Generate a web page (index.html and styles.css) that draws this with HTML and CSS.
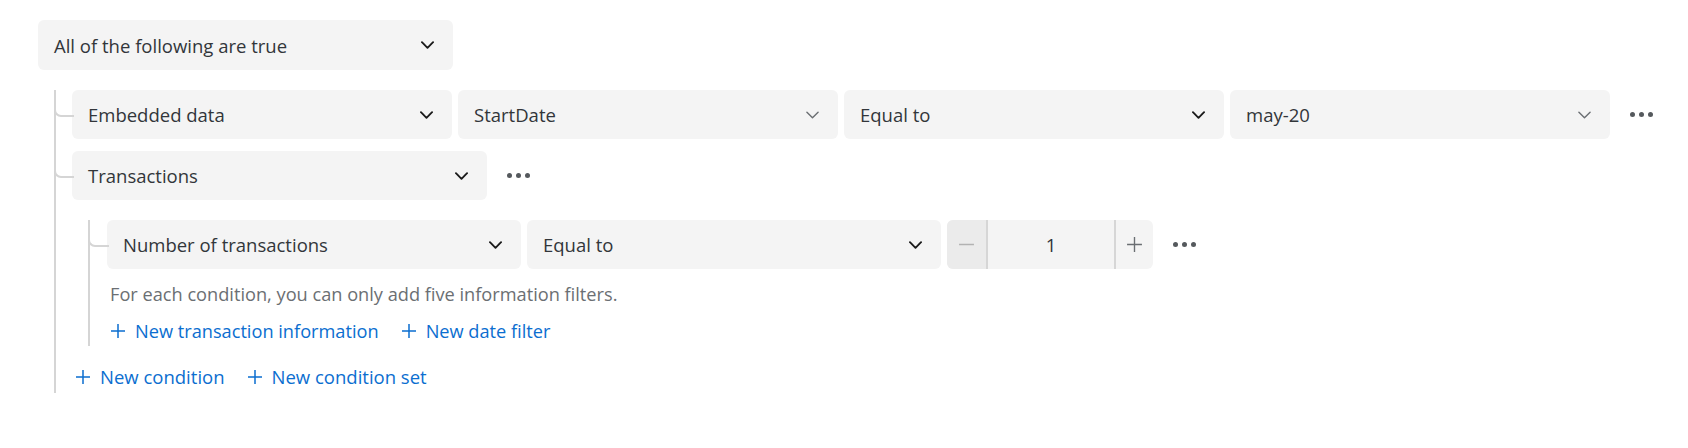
FILE: index.html
```html
<!DOCTYPE html>
<html lang="en">
<head>
<meta charset="utf-8">
<link rel="stylesheet" href="styles.css">
</head>
<body>
<div class="builder">
  <div class="select select-top">
    <span class="label">All of the following are true</span>
    <svg class="chev" viewBox="0 0 14 8"><path d="M1 1l6 6 6-6"/></svg>
  </div>
  <div class="children">
    <div class="row node">
      <div class="select">
        <span class="label">Embedded data</span>
        <svg class="chev" viewBox="0 0 14 8"><path d="M1 1l6 6 6-6"/></svg>
      </div>
      <div class="select">
        <span class="label">StartDate</span>
        <svg class="chev light" viewBox="0 0 14 8"><path d="M1 1l6 6 6-6"/></svg>
      </div>
      <div class="select">
        <span class="label">Equal to</span>
        <svg class="chev" viewBox="0 0 14 8"><path d="M1 1l6 6 6-6"/></svg>
      </div>
      <div class="select">
        <span class="label">may-20</span>
        <svg class="chev light" viewBox="0 0 14 8"><path d="M1 1l6 6 6-6"/></svg>
      </div>
      <span class="more"><i></i><i></i><i></i></span>
    </div>
    <div class="row row-2 node">
      <div class="select">
        <span class="label">Transactions</span>
        <svg class="chev" viewBox="0 0 14 8"><path d="M1 1l6 6 6-6"/></svg>
      </div>
      <span class="more"><i></i><i></i><i></i></span>
    </div>
    <div class="children nested">
      <div class="row node">
        <div class="select">
          <span class="label">Number of transactions</span>
          <svg class="chev" viewBox="0 0 14 8"><path d="M1 1l6 6 6-6"/></svg>
        </div>
        <div class="select">
          <span class="label">Equal to</span>
          <svg class="chev" viewBox="0 0 14 8"><path d="M1 1l6 6 6-6"/></svg>
        </div>
        <div class="stepper">
          <span class="step minus"><svg viewBox="0 0 16 16"><path d="M1 8h14"/></svg></span>
          <span class="value">1</span>
          <span class="step plus"><svg viewBox="0 0 16 16"><path d="M1 8h14M8 1v14"/></svg></span>
        </div>
        <span class="more"><i></i><i></i><i></i></span>
      </div>
      <p class="hint">For each condition, you can only add five information filters.</p>
      <div class="links links-inner">
        <a class="link"><svg viewBox="0 0 16 16"><path d="M1 8h14M8 1v14"/></svg>New transaction information</a>
        <a class="link"><svg viewBox="0 0 16 16"><path d="M1 8h14M8 1v14"/></svg>New date filter</a>
      </div>
    </div>
    <div class="links links-outer">
      <a class="link"><svg viewBox="0 0 16 16"><path d="M1 8h14M8 1v14"/></svg>New condition</a>
      <a class="link"><svg viewBox="0 0 16 16"><path d="M1 8h14M8 1v14"/></svg>New condition set</a>
    </div>
  </div>
</div>
</body>
</html>
```

FILE: styles.css
```css
* { box-sizing: border-box; }

body {
  margin: 0;
  background: #ffffff;
  font-family: "Open Sans", "Noto Sans", sans-serif;
  font-size: 18.5px;
  color: #32363a;
}

.builder {
  padding: 20px 0 0 38px;
}

.select {
  width: 380px;
  height: 49px;
  background: #f4f4f4;
  border-radius: 6px;
  display: flex;
  align-items: center;
  justify-content: space-between;
  padding: 0 19px 0 16px;
  flex: none;
}

.select-top {
  width: 415px;
  height: 50px;
}

.row-2 .select {
  width: 415px;
}

.nested .row .select {
  width: 414px;
}

.label {
  white-space: nowrap;
}

.chev {
  width: 13px;
  height: 8px;
  fill: none;
  stroke: #1a1a1a;
  stroke-width: 2;
  stroke-linecap: round;
  stroke-linejoin: round;
}

.chev.light {
  stroke: #6a6e72;
  stroke-width: 1.5;
}

.children {
  margin-left: 16px;
  border-left: 2px solid #d5d5d5;
  padding-left: 16px;
  padding-bottom: 2px;
}

.nested {
  margin-left: 16px;
  padding-left: 17px;
}

.row {
  display: flex;
  align-items: center;
  gap: 6px;
  position: relative;
}

.children > .row:first-child { margin-top: 20px; }
.row-2 { margin-top: 12px; }
.nested > .row:first-child { margin-top: 20px; }

.node::before {
  content: "";
  position: absolute;
  left: -18px;
  top: 14px;
  width: 18px;
  height: 11px;
  border-left: 2px solid #d5d5d5;
  border-bottom: 2px solid #d5d5d5;
  border-bottom-left-radius: 7px;
}

.nested .node::before {
  left: -19px;
  width: 19px;
}

.more {
  display: flex;
  gap: 4px;
  margin-left: 14px;
  align-items: center;
}

.more i {
  display: block;
  width: 5px;
  height: 5px;
  border-radius: 50%;
  background: #55595d;
}

.stepper {
  width: 206px;
  height: 49px;
  border-radius: 6px;
  background: #f4f4f4;
  display: flex;
  overflow: hidden;
  flex: none;
}

.step {
  display: flex;
  align-items: center;
  justify-content: center;
}

.step svg {
  width: 17px;
  height: 17px;
  fill: none;
  stroke-width: 1.3;
}

.minus {
  width: 41px;
  background: #ebebeb;
  border-right: 2px solid #d6d6d6;
}

.minus svg { stroke: #b2b2b2; }

.plus {
  width: 39px;
  border-left: 2px solid #d6d6d6;
}

.plus svg { stroke: #6a6e72; }

.value {
  flex: 1;
  display: flex;
  align-items: center;
  justify-content: center;
}

.hint {
  margin: 12px 0 0 3px;
  line-height: 26px;
  color: #6b6f73;
  font-size: 18.2px;
}

.links {
  display: flex;
  gap: 22px;
  line-height: 26px;
}

.links-inner {
  margin-top: 11px;
  padding-left: 3px;
  font-size: 18.2px;
}

.links-outer {
  margin-top: 18px;
  padding-left: 3px;
  padding-bottom: 1px;
}

.link {
  display: flex;
  align-items: center;
  gap: 9px;
  color: #0b6ed0;
  white-space: nowrap;
}

.link svg {
  width: 16px;
  height: 16px;
  fill: none;
  stroke: #0b6ed0;
  stroke-width: 1.5;
}
```
